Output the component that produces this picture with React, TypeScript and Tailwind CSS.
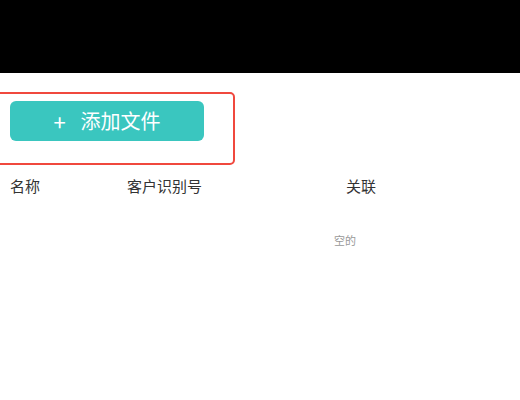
import React from 'react';

const App: React.FC = () => {
  const columns = [
    { id: 'name', title: '名称', width: 'w-[117px]' },
    { id: 'client', title: '客户识别号', width: 'w-[219px]' },
    { id: 'link', title: '关联', width: 'w-[100px]' },
  ];

  return (
    <div className="w-[520px] h-[400px] bg-white overflow-hidden font-['Noto_Sans_CJK_SC','Noto_Sans',sans-serif]">
      <div className="h-[73px] bg-black"></div>

      <div className="mt-[19px] -ml-[6px] w-[241px] border-2 border-[#f0483e] rounded-[5px] pt-[7px] pb-[22px] pl-[14px]">
        <button className="w-[194px] h-[40px] bg-[#3ac6bf] rounded-[6px] text-white text-[20px] flex items-center justify-center gap-[15px] leading-none">
          <span className="text-[22px]">+</span>
          <span>添加文件</span>
        </button>
      </div>

      <div className="mt-[10px] pl-[10px] flex text-[15px] leading-[21px] text-[#333]">
        {columns.map((col) => (
          <div key={col.id} className={col.width}>{col.title}</div>
        ))}
      </div>

      <div className="mt-[36px] pl-[334px] text-[11px] leading-[16px] text-[#999]">空的</div>
    </div>
  );
};

export default App;
